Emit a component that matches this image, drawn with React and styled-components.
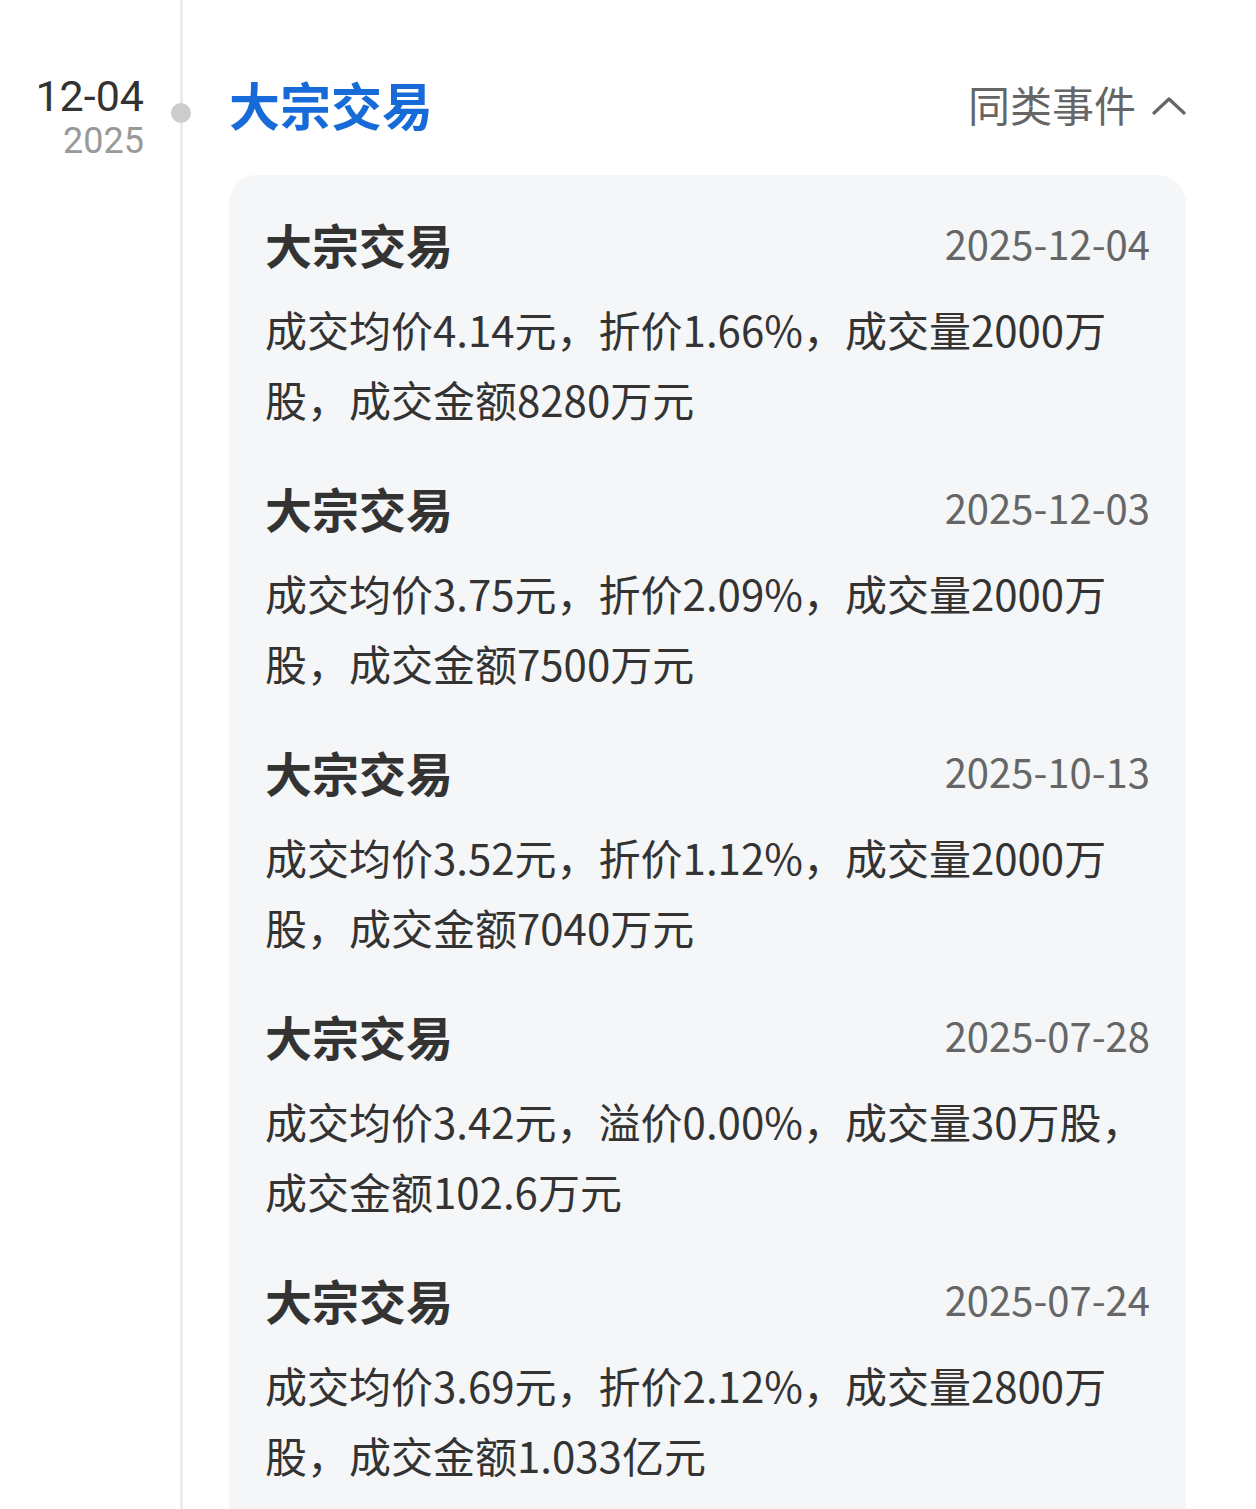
import React from 'react';
import styled, { createGlobalStyle } from 'styled-components';

const GlobalStyle = createGlobalStyle`
    html, body {
        margin: 0;
        padding: 0;
        background: #ffffff;
    }
    body {
        font-family: "Noto Sans CJK SC", "Noto Sans", sans-serif;
        -webkit-font-smoothing: antialiased;
    }
`;

const events = [
    { date: '2025-12-04', desc: '成交均价4.14元，折价1.66%，成交量2000万股，成交金额8280万元' },
    { date: '2025-12-03', desc: '成交均价3.75元，折价2.09%，成交量2000万股，成交金额7500万元' },
    { date: '2025-10-13', desc: '成交均价3.52元，折价1.12%，成交量2000万股，成交金额7040万元' },
    { date: '2025-07-28', desc: '成交均价3.42元，溢价0.00%，成交量30万股，成交金额102.6万元' },
    { date: '2025-07-24', desc: '成交均价3.69元，折价2.12%，成交量2800万股，成交金额1.033亿元' },
];

// 타임라인 한 줄: 날짜 | 축 | 내용
const TimelineRow = styled.div`
    display: grid;
    grid-template-columns: 144px 75px 1fr;
    padding-right: 70px;
    min-height: 1509px;
`;

// 왼쪽 날짜
const DateColumn = styled.div`
    padding-top: 72px;
    text-align: right;
    font-family: Roboto, "Noto Sans CJK SC", sans-serif;
`;

const MonthDay = styled.div`
    font-size: 43px;
    line-height: 48px;
    color: #333333;
`;

const Year = styled.div`
    font-size: 36px;
    line-height: 42px;
    color: #999999;
`;

// 세로 축 + 점
const Axis = styled.div`
    display: flex;
    flex-direction: column;
    align-items: center;
`;

const AxisLine = styled.div`
    width: 3px;
    background: #ebebeb;
    height: ${(p) => (p.$top ? '103px' : 'auto')};
    flex: ${(p) => (p.$top ? '0 0 auto' : '1')};
`;

const Dot = styled.div`
    width: 20px;
    height: 20px;
    border-radius: 50%;
    background: #cccccc;
    margin-left: -1px;
`;

// 오른쪽 내용
const Content = styled.div`
    margin-left: 10px;
    padding-top: 69px;
    display: flex;
    flex-direction: column;
`;

const Header = styled.div`
    display: flex;
    align-items: center;
    height: 70px;
`;

const Title = styled.div`
    font-size: 51px;
    font-weight: 700;
    color: #176bd8;
    line-height: 70px;
`;

const Spacer = styled.div`
    flex-grow: 1;
`;

const SameKind = styled.div`
    display: flex;
    align-items: center;
    gap: 16px;
    font-size: 42px;
    color: #666666;
    line-height: 70px;
`;

const Chevron = styled.svg`
    margin-top: 3px;
`;

const Card = styled.div`
    margin-top: 36px;
    background: #f5f6f8;
    border-radius: 28px;
    padding: 36px 36px 40px 36px;
`;

const Item = styled.div`
    padding-bottom: 41px;
`;

const ItemHead = styled.div`
    display: flex;
    align-items: center;
    justify-content: space-between;
    height: 64px;
`;

const ItemTitle = styled.div`
    font-size: 47px;
    font-weight: 700;
    color: #333333;
`;

const ItemDate = styled.div`
    font-size: 40px;
    color: #666666;
`;

const ItemDesc = styled.div`
    margin-top: 19px;
    font-size: 42px;
    line-height: 70px;
    color: #333333;
`;

const ChevronUp = () => (
    <Chevron width="34" height="20" viewBox="0 0 34 20" fill="none">
        <polyline points="2,17 17,3 32,17" stroke="#666666" strokeWidth="3.2" strokeLinecap="round" strokeLinejoin="round" />
    </Chevron>
);

const App = () => {
    return (
        <>
            <GlobalStyle />
            <TimelineRow>
                <DateColumn>
                    <MonthDay>12-04</MonthDay>
                    <Year>2025</Year>
                </DateColumn>
                <Axis>
                    <AxisLine $top />
                    <Dot />
                    <AxisLine />
                </Axis>
                <Content>
                    <Header>
                        <Title>大宗交易</Title>
                        <Spacer />
                        <SameKind>
                            同类事件
                            <ChevronUp />
                        </SameKind>
                    </Header>
                    <Card>
                        {events.map((e) => (
                            <Item key={e.date}>
                                <ItemHead>
                                    <ItemTitle>大宗交易</ItemTitle>
                                    <ItemDate>{e.date}</ItemDate>
                                </ItemHead>
                                <ItemDesc>{e.desc}</ItemDesc>
                            </Item>
                        ))}
                    </Card>
                </Content>
            </TimelineRow>
        </>
    );
};

export default App;
